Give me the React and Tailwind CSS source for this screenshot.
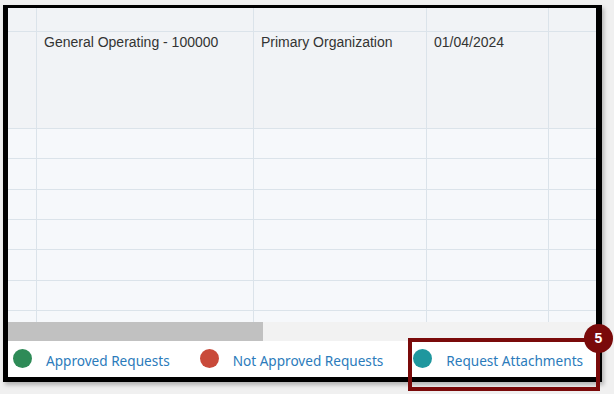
import React from 'react';

const cols = ['w-[29px]', 'w-[217px]', 'w-[173px]', 'w-[122px]', 'flex-1'];

function Row({ h, bg, cells = [] }) {
  return (
    <div className={`flex shrink-0 border-b border-[#dbe3ea] ${h} ${bg}`}>
      {cols.map((w, i) => (
        <div
          key={i}
          className={`${w} shrink-0 ${i < 4 ? 'border-r border-[#dbe3ea]' : ''} pl-[7px] pt-[2px] text-[14px] leading-4 text-[#333]`}
        >
          {cells[i] || ''}
        </div>
      ))}
    </div>
  );
}

function Legend({ color, label }) {
  return (
    <div className="flex items-center">
      <span className={`w-[19px] h-[19px] rounded-full ${color}`} />
      <span className="ml-[14px] pt-[4px] text-[#2b7bbb]">{label}</span>
    </div>
  );
}

export default function App() {
  return (
    <div className="w-[614px] h-[394px] bg-[#f0f0f0] relative overflow-hidden" style={{ fontFamily: '"Liberation Sans", Arial, sans-serif' }}>
      <div className="absolute left-[3px] top-[5px] w-[599px] h-[377px] bg-black pl-[5px] pt-[3px] pr-[6px] pb-[5px] shadow-[2px_3px_4px_rgba(0,0,0,0.25)]">
        <div className="w-full h-full bg-white flex flex-col overflow-hidden">
          <div className="h-[314px] shrink-0 flex flex-col overflow-hidden bg-[#f6f8fb]">
            <Row h="h-[24px]" bg="bg-[#f1f3f6]" />
            <Row
              h="h-[97px]"
              bg="bg-[#f1f3f6]"
              cells={['', 'General Operating - 100000', 'Primary Organization', '01/04/2024', '']}
            />
            <Row h="h-[30px]" bg="bg-[#f6f8fb]" />
            <Row h="h-[31px]" bg="bg-[#f6f8fb]" />
            <Row h="h-[30px]" bg="bg-[#f6f8fb]" />
            <Row h="h-[30px]" bg="bg-[#f6f8fb]" />
            <Row h="h-[31px]" bg="bg-[#f6f8fb]" />
            <Row h="h-[30px]" bg="bg-[#f6f8fb]" />
            <Row h="h-[20px]" bg="bg-[#f6f8fb]" />
          </div>
          <div className="h-[19px] shrink-0 flex bg-[#f2f2f2]">
            <div className="w-[255px] bg-[#c1c1c1]" />
          </div>
          <div
            className="flex-1 flex items-center pl-[5px] text-[13.6px]"
            style={{ fontFamily: '"Noto Sans", "Open Sans", sans-serif' }}
          >
            <Legend color="bg-[#2e8b57]" label="Approved Requests" />
            <div className="ml-[30px]">
              <Legend color="bg-[#c94a3a]" label="Not Approved Requests" />
            </div>
            <div className="ml-[30px]">
              <Legend color="bg-[#1f979e]" label="Request Attachments" />
            </div>
          </div>
        </div>
      </div>

      <div className="absolute left-[408px] top-[338px] w-[192px] h-[53px] border-4 border-[#7a0a0a]" />
      <div className="absolute left-[584px] top-[324px] w-[29px] h-[29px] rounded-full bg-[#7a0a0a] flex items-center justify-center text-white font-bold text-[14px]">
        5
      </div>
    </div>
  );
}
